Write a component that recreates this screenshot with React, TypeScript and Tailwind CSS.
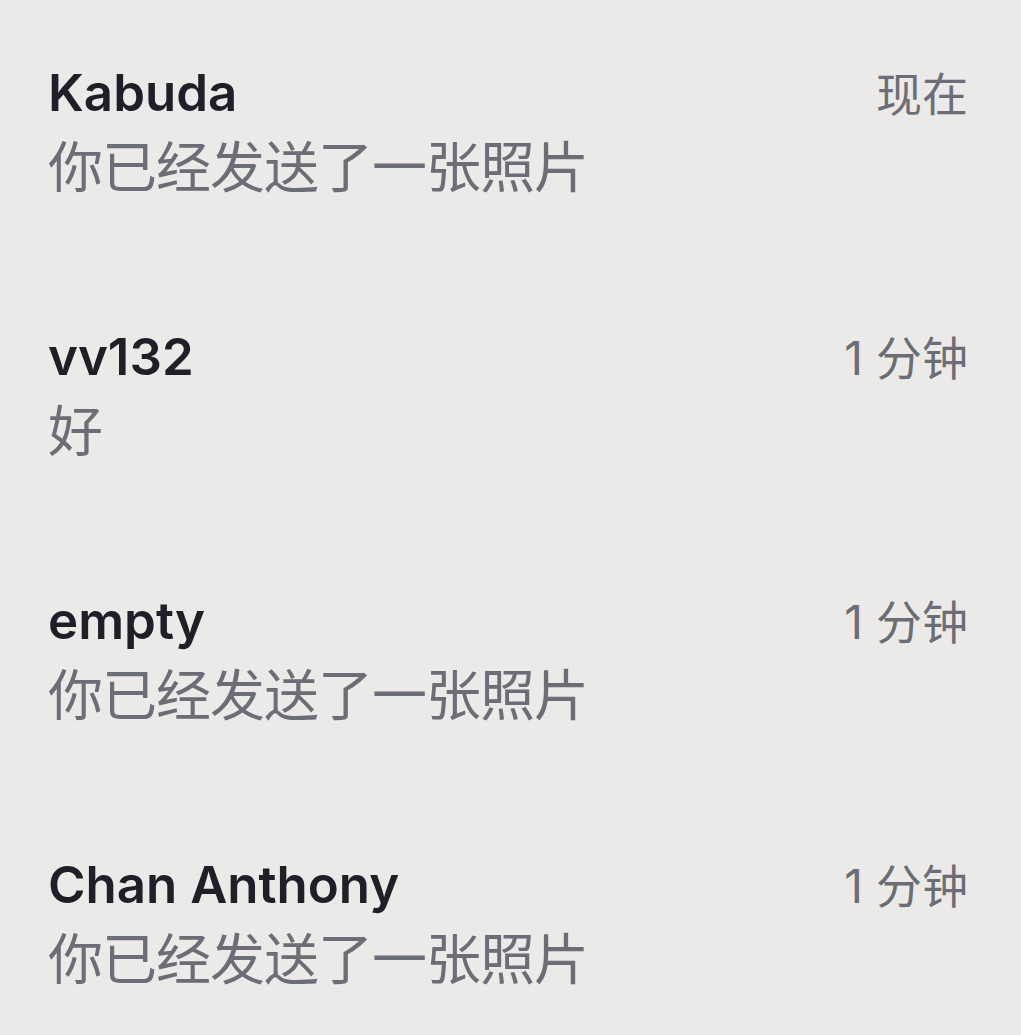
import React from "react";

const rows = [
  { name: "Kabuda", time: "现在", msg: "你已经发送了一张照片" },
  { name: "vv132", time: "1分钟", msg: "好" },
  { name: "empty", time: "1分钟", msg: "你已经发送了一张照片" },
  { name: "Chan Anthony", time: "1分钟", msg: "你已经发送了一张照片" },
];

function Time({ t }: { t: string }) {
  if (t.startsWith("1")) {
    return (
      <span className="text-[46px] leading-[60px] text-[#6b6e76]">
        <span className="mr-[13px]">1</span>
        {t.slice(1)}
      </span>
    );
  }
  return <span className="text-[46px] leading-[60px] text-[#6b6e76]">{t}</span>;
}

export default function App() {
  return (
    <div
      className="w-[1021px] h-[1035px] bg-[#ECEAE9] pt-[63px] pl-[48px] pr-[53px] overflow-hidden"
      style={{ fontFamily: "Inter, 'Noto Sans CJK SC', sans-serif" }}
    >
      <div className="flex flex-col gap-[126px]">
        {rows.map((r) => (
          <div key={r.name} className="flex flex-col">
            <div className="flex justify-between items-baseline h-[60px]">
              <span className="text-[51px] leading-[60px] font-semibold text-[#1e1f27]">
                {r.name}
              </span>
              <Time t={r.time} />
            </div>
            <div className="mt-[10px] text-[55px] leading-[68px] text-[#6b6e76] tracking-[-1px]">
              {r.msg}
            </div>
          </div>
        ))}
      </div>
    </div>
  );
}
